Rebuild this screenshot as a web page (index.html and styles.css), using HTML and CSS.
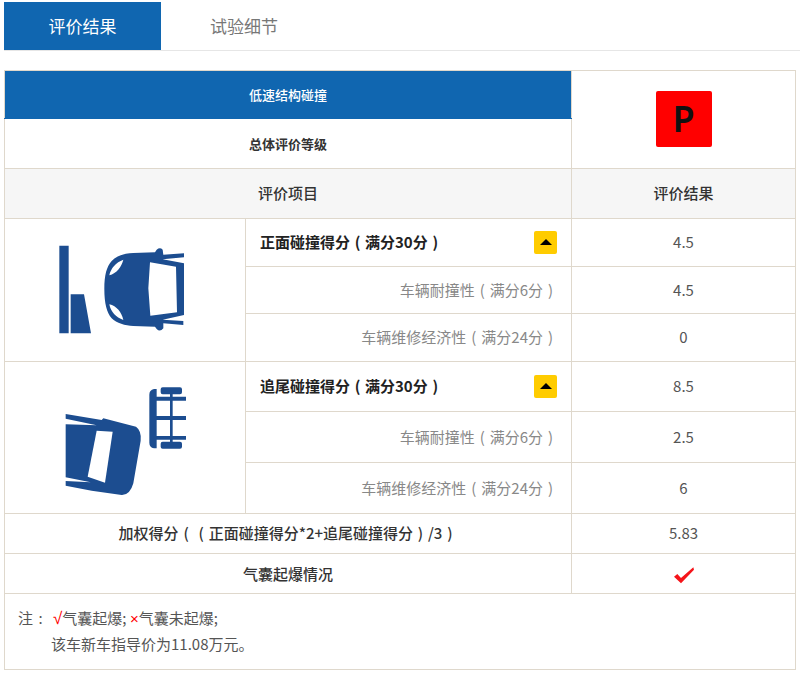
FILE: index.html
```html
<!DOCTYPE html>
<html lang="zh-CN">
<head>
<meta charset="utf-8">
<title>评价结果</title>
<link rel="stylesheet" href="styles.css">
</head>
<body>
<div class="tabs">
  <div class="tab tab-active">评价结果</div>
  <div class="tab">试验细节</div>
</div>
<table class="report">
  <colgroup><col class="c1"><col class="c2"><col class="c3"></colgroup>
  <tr class="r48">
    <td colspan="2" class="banner">低速结构碰撞</td>
    <td rowspan="2" class="grade-cell"><div class="grade">P</div></td>
  </tr>
  <tr class="r50"><td colspan="2" class="overall">总体评价等级</td></tr>
  <tr class="r50 head">
    <td colspan="2">评价项目</td>
    <td>评价结果</td>
  </tr>
  <tr class="r48">
    <td rowspan="3" class="pic">
      <svg class="icon" width="240" height="142" viewBox="-105 -18 720 426">
        <path class="ink" d="M58 62H86V325H58ZM92 208H132L153 325H92Z"/>
        <path class="ink" d="M193 192C193 150 200 125 215 108C230 92 255 85 280 84L345 82L350 74Q360 66 368 74L370 89L432 85V97L368 103L432 115V270L368 284L430 288V300L370 295L370 310Q360 322 350 312L345 305L280 303C255 302 230 295 215 280C200 262 193 235 193 192Z"/>
        <path class="paper" d="M330 112L408 125L411 262L331 272L325 190ZM208 151C212 130 228 112 250 104C245 125 230 145 208 151ZM208 238C230 243 245 262 250 285C228 278 212 260 208 238Z"/>
      </svg>
    </td>
    <td class="main"><div class="main-row"><span class="main-text">正面碰撞得分<span class="pn">(</span>满分30分<span class="pn">)</span></span><span class="toggle"></span></div></td>
    <td class="val">4.5</td>
  </tr>
  <tr class="r47"><td class="sub">车辆耐撞性<span class="pn">(</span>满分6分<span class="pn">)</span></td><td class="val">4.5</td></tr>
  <tr class="r48"><td class="sub">车辆维修经济性<span class="pn">(</span>满分24分<span class="pn">)</span></td><td class="val">0</td></tr>
  <tr class="r50">
    <td rowspan="3" class="pic">
      <svg class="icon" width="240" height="151" viewBox="-135 -24 720 453">
        <path class="ink" d="M47 132L155 150L160 145L258 170Q275 182 272 212L250 340Q240 376 215 375L125 362L47 347V333L122 337L47 322V163L140 166L47 146Z"/>
        <path class="paper" d="M140 182L188 185L165 338L113 320Z"/>
        <path class="ink" d="M320 57V235H312Q298 232 298 218V74Q298 60 312 57ZM320 80H408V92H368V138H408V150H368V198H408V209H368V215H390Q396 215 396 221V230Q396 236 390 236H338Q332 236 332 230V221Q332 215 338 215H360V209H320V198H360V150H320V138H360V92H320ZM338 52H390Q396 52 396 58V67Q396 73 390 73H368V80H360V73H338Q332 73 332 67V58Q332 52 338 52Z"/>
      </svg>
    </td>
    <td class="main"><div class="main-row"><span class="main-text">追尾碰撞得分<span class="pn">(</span>满分30分<span class="pn">)</span></span><span class="toggle"></span></div></td>
    <td class="val">8.5</td>
  </tr>
  <tr class="r51"><td class="sub">车辆耐撞性<span class="pn">(</span>满分6分<span class="pn">)</span></td><td class="val">2.5</td></tr>
  <tr class="r51"><td class="sub">车辆维修经济性<span class="pn">(</span>满分24分<span class="pn">)</span></td><td class="val">6</td></tr>
  <tr class="r40">
    <td colspan="2" class="strong">加权得分<span class="pn">(</span><span class="pn">(</span>正面碰撞得分*2+追尾碰撞得分<span class="pn">)</span>/3<span class="pn">)</span></td>
    <td class="val">5.83</td>
  </tr>
  <tr class="r40">
    <td colspan="2" class="strong strong-flat">气囊起爆情况</td>
    <td class="val check-cell">
      <svg class="check" width="20" height="17" viewBox="462 590 60 49"><path d="M462 618L472 610L483 622L520 590L522 597L483 638Z"/></svg>
    </td>
  </tr>
  <tr class="r76">
    <td colspan="3" class="note">
      <div class="note-line"><span class="note-label">注<span class="pn">:</span></span><span class="mark mark-yes">√</span>气囊起爆; <span class="mark">×</span>气囊未起爆;</div>
      <div class="note-line note-indent">该车新车指导价为11.08万元。</div>
    </td>
  </tr>
</table>
</body>
</html>
```
FILE: styles.css
```css
* { box-sizing: border-box; }
html, body { margin: 0; background: #fff; }
body {
  padding: 2px 0 0 4px;
  font-family: "Noto Sans CJK SC", "Noto Sans", sans-serif;
  color: #333;
  overflow: hidden;
}
.tabs {
  display: flex;
  height: 49px;
  border-bottom: 1px solid #e6e6e6;
  margin-bottom: 19px;
}
.tab {
  width: 157px;
  height: 48px;
  line-height: 48px;
  text-align: center;
  font-size: 17px;
  color: #777;
}
.tab-active { background: #1066b0; color: #fff; }
.tab-active + .tab { width: 166px; }
.report {
  width: 791px;
  table-layout: fixed;
  border-collapse: collapse;
  font-size: 14px;
}
.c1 { width: 241px; }
.c2 { width: 326px; }
.c3 { width: 224px; }
.report td {
  border: 1px solid #dfd8cc;
  padding: 0 0 2px;
  text-align: center;
  vertical-align: middle;
}
.r40 { height: 40px; }
.r47 { height: 47px; }
.r48 { height: 48px; }
.r50 { height: 50px; }
.r51 { height: 51px; }
.r76 { height: 76px; }
.pn { display: inline-block; width: 15px; text-align: center; }
.report .banner {
  background: #1066b0;
  border-bottom-color: #1066b0;
  color: #fff;
  font-size: 13px;
  font-weight: 500;
  padding-bottom: 0;
}
.report .overall { font-size: 13px; font-weight: 700; color: #333; padding-bottom: 0; }
.grade-cell { line-height: 0; }
.grade {
  display: inline-flex;
  align-items: center;
  justify-content: center;
  width: 56px;
  height: 56px;
  border-radius: 2px;
  background: #f00;
  color: #111;
  font-family: "Noto Sans", sans-serif;
  font-size: 36px;
  font-weight: 600;
  line-height: 1;
}
.report .head td { background: #f6f6f6; font-size: 15px; font-weight: 500; color: #333; padding-bottom: 3px; }
.report .pic { line-height: 0; padding: 0; }
.icon { display: block; }
.ink { fill: #1c4d90; }
.paper { fill: #fff; }
.main { font-size: 15px; font-weight: 700; color: #222; }
.report .main { padding: 0; }
.main-row {
  display: flex;
  align-items: center;
  justify-content: space-between;
  padding: 0 14px;
}
.main-text { padding-bottom: 2px; }
.toggle {
  position: relative;
  width: 23px;
  height: 23px;
  border-radius: 2px;
  background: #fc0;
}
.toggle::after {
  content: "";
  position: absolute;
  left: 6px;
  top: 8px;
  border-left: 6px solid transparent;
  border-right: 6px solid transparent;
  border-bottom: 6px solid #000;
}
.report .sub { text-align: right; padding-right: 13px; font-size: 15px; color: #888; }
.val { font-size: 15px; color: #555; }
.strong { font-size: 15px; font-weight: 500; color: #333; }
.report .strong-flat { padding-bottom: 0; }
.report .check-cell { padding: 4px 0 0; }
.check { display: block; margin: 0 auto; fill: #f5141a; }
.report .note { text-align: left; padding-left: 13px; color: #555; font-size: 15px; }
.note-line { height: 26px; line-height: 26px; }
.note-label { display: inline-block; width: 35px; }
.note-indent { padding-left: 33px; }
.mark { color: #f00; font-family: "Liberation Sans", sans-serif; }
.mark-yes { font-size: 17px; }
```
